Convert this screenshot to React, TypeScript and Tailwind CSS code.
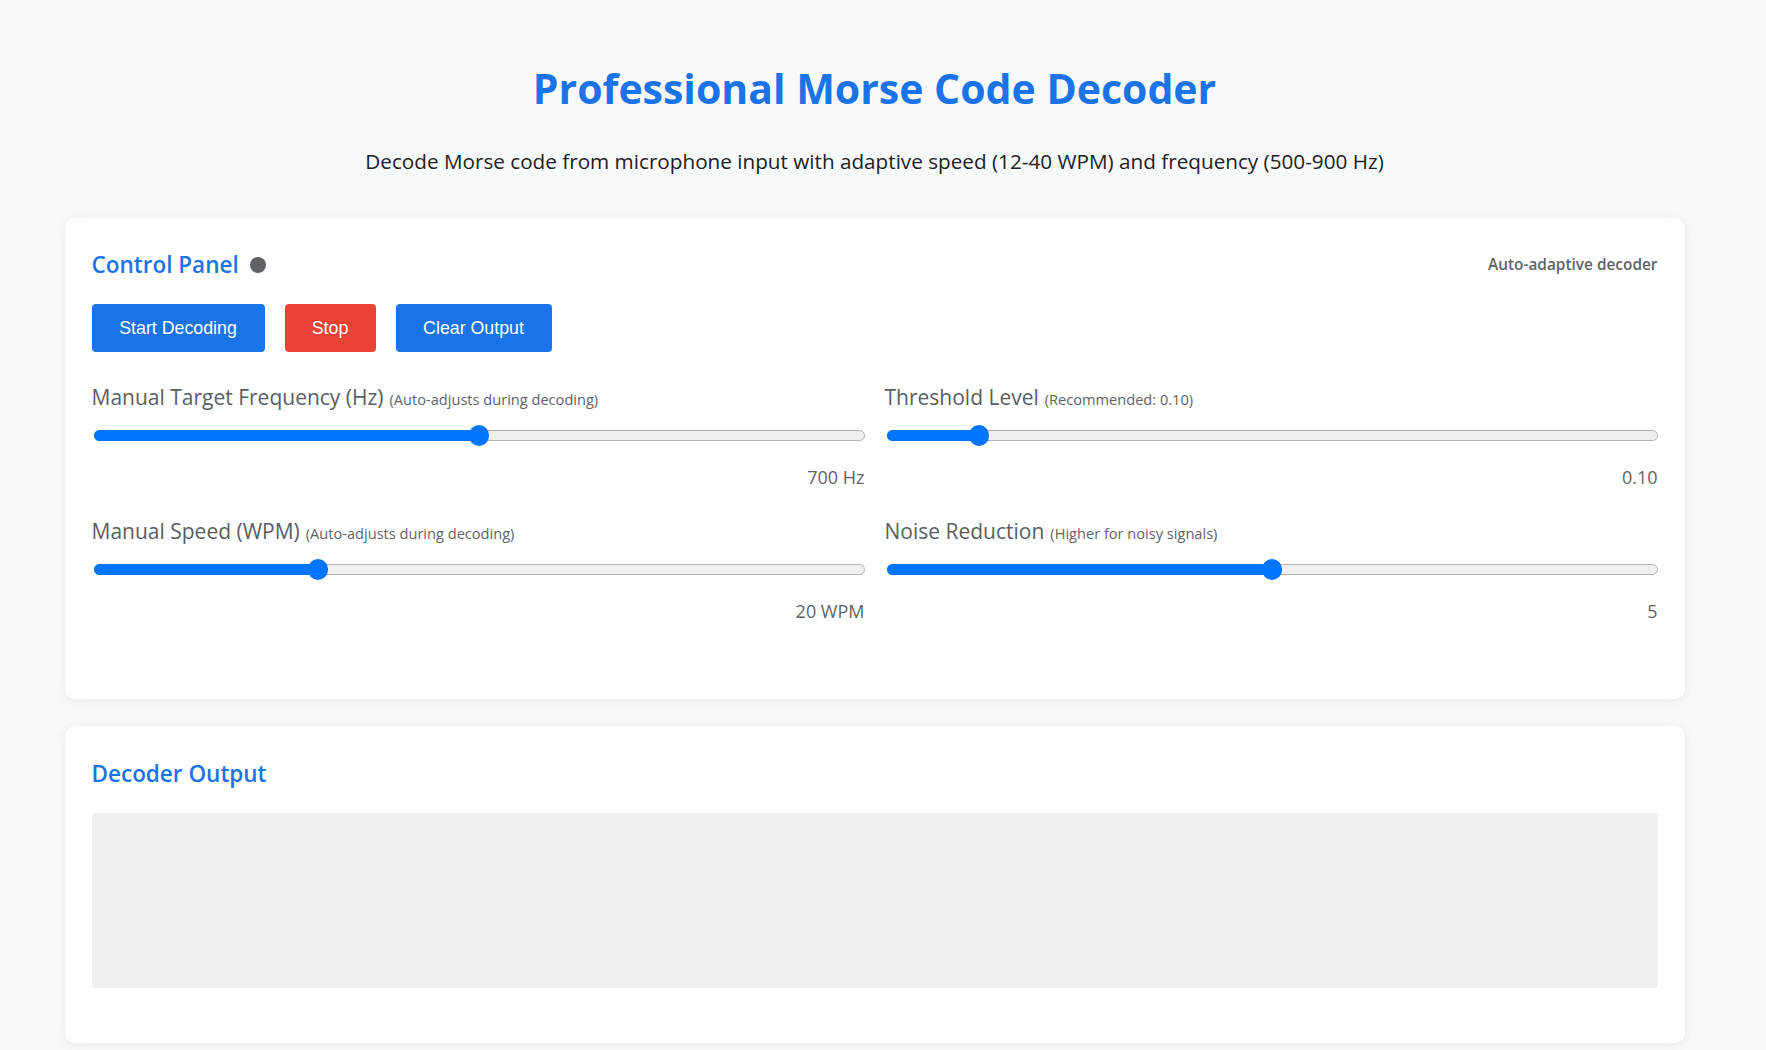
import React from "react";

type SliderProps = {
  label: string;
  note: string;
  value: string;
  pct: number;
};

const Slider = ({ label, note, value, pct }: SliderProps) => {
  return (
    <div>
      <div className="flex items-baseline gap-[6px] leading-[28px]">
        <span className="text-[21px] text-[#5a5e63]">{label}</span>
        <span className="text-[14.6px] text-[#5f6368]">{note}</span>
      </div>
      <div className="relative mt-[12px] h-[21px]">
        <div className="absolute left-[2px] right-0 top-[5px] h-[11px] rounded-full border border-[#b2b2b2] bg-[#efefef]" />
        <div
          className="absolute left-[2px] top-[5px] h-[11px] rounded-full bg-[#0075ff]"
          style={{ width: `calc(${pct} * (100% - 22px) + 10px)` }}
        />
        <div
          className="absolute top-0 h-[21px] w-[20px] rounded-full bg-[#0075ff]"
          style={{ left: `calc(${pct} * (100% - 22px) + 2px)` }}
        />
      </div>
      <div className="mt-[19px] text-right text-[18px] leading-[24px] text-[#5f6368]">
        {value}
      </div>
    </div>
  );
};

const App = () => {
  const sliders = [
    {
      label: "Manual Target Frequency (Hz)",
      note: "(Auto-adjusts during decoding)",
      value: "700 Hz",
      pct: 0.5,
    },
    {
      label: "Threshold Level",
      note: "(Recommended: 0.10)",
      value: "0.10",
      pct: 0.11,
    },
    {
      label: "Manual Speed (WPM)",
      note: "(Auto-adjusts during decoding)",
      value: "20 WPM",
      pct: 0.286,
    },
    {
      label: "Noise Reduction",
      note: "(Higher for noisy signals)",
      value: "5",
      pct: 0.5,
    },
  ];

  return (
    <div className="min-h-screen bg-[#f8f9fa] pb-[40px] font-['Open_Sans',sans-serif]">
      <div className="w-[1749px]">
        <div className="mx-auto max-w-[1620px] pt-[63px]">
          <h1 className="text-center text-[41px] font-bold leading-[50px] text-[#1a73e8]">
            Professional Morse Code Decoder
          </h1>
          <p className="mt-[34px] text-center text-[20.7px] leading-[28px] text-[#202124]">
            Decode Morse code from microphone input with adaptive speed (12-40 WPM) and frequency (500-900 Hz)
          </p>

          <div className="mt-[43px] rounded-[10px] bg-white px-[27px] pb-[76px] pt-[32px] shadow-[0_2px_10px_rgba(0,0,0,0.08)]">
            <div className="flex h-[30px] items-center justify-between">
              <div className="flex items-center">
                <h2 className="text-[22.5px] font-semibold leading-[30px] text-[#1a73e8]">
                  Control Panel
                </h2>
                <span className="ml-[11px] h-[16px] w-[16px] rounded-full bg-[#5f6368]" />
              </div>
              <span className="text-[15.4px] font-semibold text-[#5f6368]">
                Auto-adaptive decoder
              </span>
            </div>

            <div className="mt-[24px] flex gap-[20px] font-['Liberation_Sans',sans-serif] text-[17.8px] text-white">
              <button className="h-[48px] w-[173px] rounded-[4px] bg-[#1a73e8]">
                Start Decoding
              </button>
              <button className="h-[48px] w-[91px] rounded-[4px] bg-[#ea4335]">
                Stop
              </button>
              <button className="h-[48px] w-[156px] rounded-[4px] bg-[#1a73e8]">
                Clear Output
              </button>
            </div>

            <div className="mt-[31px] grid grid-cols-2 gap-x-[20px] gap-y-[28px]">
              {sliders.map((s) => (
                <Slider key={s.label} {...s} />
              ))}
            </div>
          </div>

          <div className="mt-[27px] rounded-[10px] bg-white px-[27px] pb-[55px] pt-[33px] shadow-[0_2px_10px_rgba(0,0,0,0.08)]">
            <h2 className="text-[22.5px] font-semibold leading-[30px] text-[#1a73e8]">
              Decoder Output
            </h2>
            <div className="mt-[24px] h-[175px] rounded-[4px] bg-[#efefef]" />
          </div>
        </div>
      </div>
    </div>
  );
};

export default App;
